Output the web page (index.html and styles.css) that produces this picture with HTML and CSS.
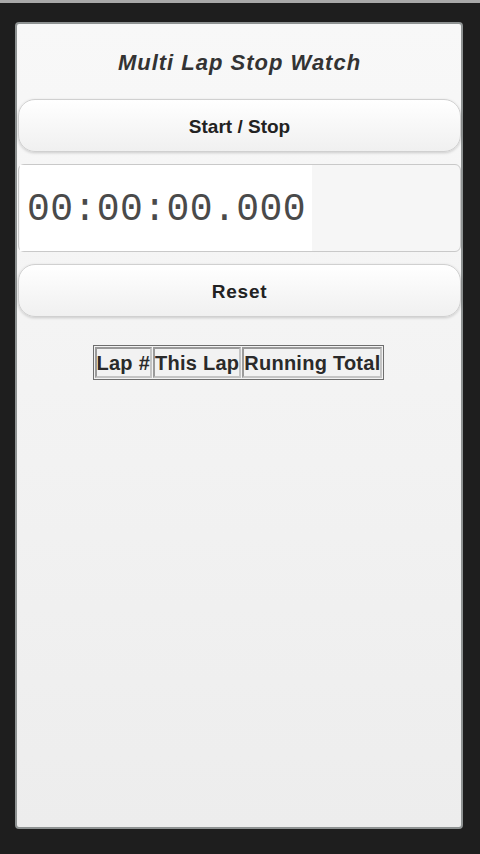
FILE: index.html
```html
<!DOCTYPE html>
<html>
<head>
<meta charset="utf-8">
<link rel="stylesheet" href="styles.css">
</head>
<body>
<div class="screen">
  <div class="panel">
    <h1 class="title">Multi Lap Stop Watch</h1>
    <div class="btn">Start / Stop</div>
    <div class="timer-box">
      <div class="timer">00:00:00.000</div>
    </div>
    <div class="btn btn-reset">Reset</div>
    <div class="table-wrap">
      <table class="laps">
        <tr><th>Lap #</th><th>This Lap</th><th>Running Total</th></tr>
      </table>
    </div>
  </div>
</div>
</body>
</html>
```

FILE: styles.css
```css
html, body {
  margin: 0;
  padding: 0;
  height: 100%;
}
body {
  background: #1e1e1e;
  font-family: "Liberation Sans", Arial, sans-serif;
  color: #2a2a2a;
}
.screen {
  border-top: 3px solid #a9a9a9;
  padding: 19px 17px 0 15px;
  box-sizing: border-box;
  height: 854px;
}
.panel {
  height: 807px;
  box-sizing: border-box;
  border: 2px solid #8e9292;
  border-radius: 4px;
  background: linear-gradient(#f8f8f8, #ededed);
  padding: 0 0 0 1px;
  display: flex;
  flex-direction: column;
}
.title {
  margin: 0;
  height: 75px;
  display: flex;
  align-items: center;
  justify-content: center;
  padding-top: 2px;
  box-sizing: border-box;
  font-size: 22px;
  font-style: italic;
  font-weight: bold;
  letter-spacing: 1px;
  color: #333;
}
.btn {
  height: 53px;
  box-sizing: border-box;
  border: 1px solid #d0d0d0;
  border-radius: 17px;
  background: linear-gradient(#ffffff, #f0f0f0);
  box-shadow: 0 1px 3px rgba(0, 0, 0, 0.18);
  display: flex;
  align-items: center;
  justify-content: center;
  padding-top: 3px;
  font-size: 19px;
  font-weight: bold;
  color: #222;
}
.btn-reset {
  letter-spacing: 0.8px;
}
.timer-box {
  margin: 12px 0;
  height: 88px;
  box-sizing: border-box;
  border: 1px solid #c9c9c9;
  border-radius: 6px;
  background: #f6f6f6;
  padding: 0 0 0 1px;
  display: flex;
}
.timer {
  width: 292px;
  background: #ffffff;
  box-sizing: border-box;
  padding: 2px 0 0 7px;
  display: flex;
  align-items: center;
  font-family: "Liberation Mono", "DejaVu Sans Mono", monospace;
  font-size: 38px;
  letter-spacing: 0.45px;
  color: #4a4a4a;
}
.table-wrap {
  display: flex;
  justify-content: center;
  padding-top: 28px;
  padding-right: 2px;
}
.laps {
  border: 1px solid #6e6e6e;
  border-spacing: 1px;
  background: #f2f2f2;
}
.laps th {
  border: 2px solid;
  border-color: #9a9a9a #c4c4c4 #c4c4c4 #9a9a9a;
  padding: 2px 0 1px;
  font-size: 20px;
  font-weight: bold;
  letter-spacing: 0.25px;
  color: #2a2a2a;
  line-height: 24px;
}
```
